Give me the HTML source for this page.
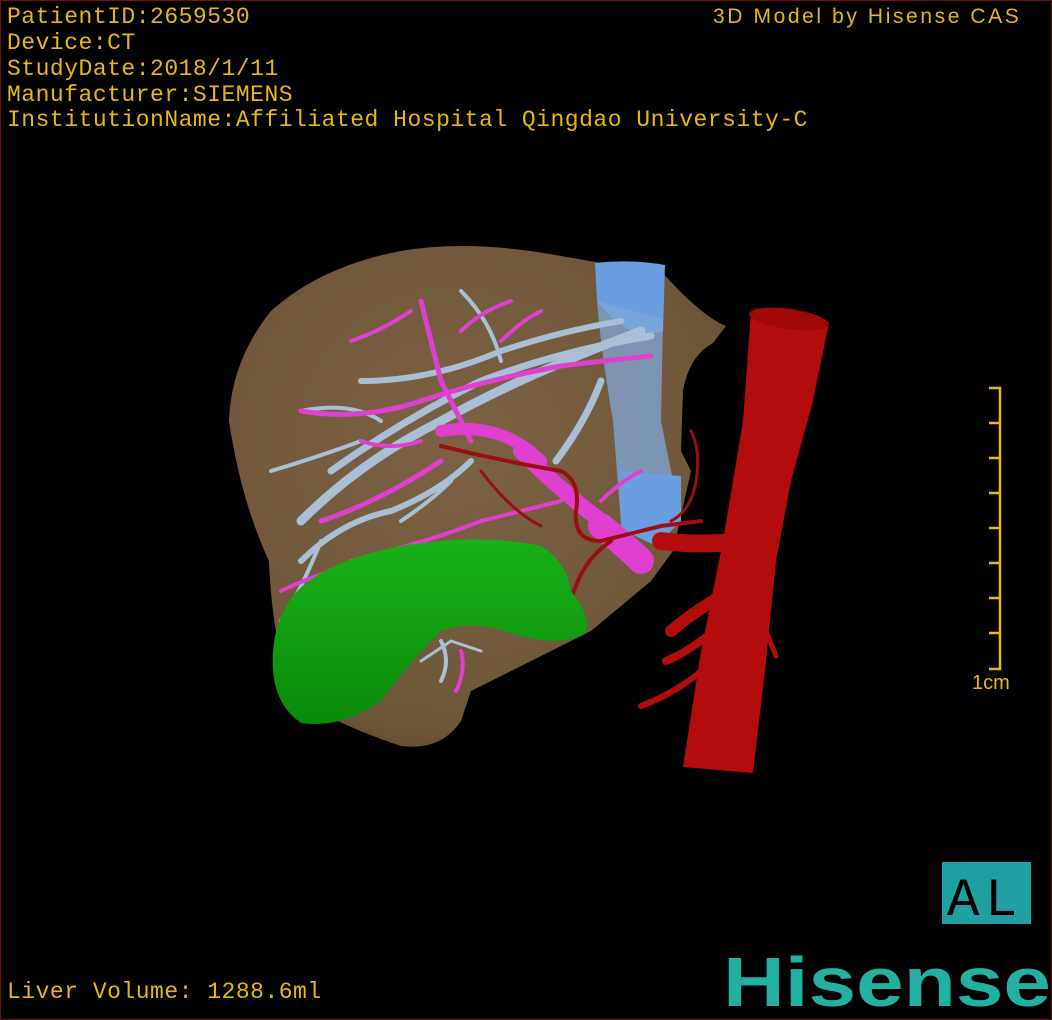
<!DOCTYPE html>
<html><head><meta charset="utf-8"><style>
html,body{margin:0;padding:0;background:#000;}
#c{position:relative;width:1050px;height:1018px;border:1px solid #6e1010;background:#000;overflow:hidden;}
.t{position:absolute;left:6px;color:#e8b810;font-family:"Liberation Mono",monospace;font-size:23px;letter-spacing:0.5px;line-height:26px;white-space:pre;}
svg{position:absolute;left:0;top:0;}
</style></head><body><div id="c">
<svg width="1052" height="1020" viewBox="0 0 1052 1020">
<defs>
<radialGradient id="lv" cx="0.45" cy="0.4" r="0.7"><stop offset="0" stop-color="#7c6244"/><stop offset="0.8" stop-color="#6e5639"/><stop offset="1" stop-color="#5a4630"/></radialGradient>
<linearGradient id="gr" x1="0" y1="0" x2="0" y2="1"><stop offset="0" stop-color="#18b018"/><stop offset="1" stop-color="#0a8a0a"/></linearGradient>
</defs>
<path fill="url(#lv)" d="M270,310 Q320,265 400,250 Q470,238 560,255 L600,262 L660,270 Q700,315 725,325 L712,342 Q688,355 682,390 L680,450 L690,470 L672,550 L650,580 L590,630 L560,645 L470,690 L460,720 Q440,750 400,745 Q340,725 300,700 Q272,660 268,560 Q240,500 228,420 Q230,360 270,310Z"/>
<path fill="#6a9ee0" d="M594,262 Q630,258 664,264 L662,330 L640,335 Q610,320 596,300Z"/>
<path fill="#7fa8d8" opacity="0.75" d="M596,300 L662,318 L660,420 L680,520 L620,522 L612,420 Q600,350 596,300Z"/>
<path fill="#6a9ee0" d="M618,470 L680,475 L680,520 L655,545 L620,528Z"/>
<g fill="none" stroke-linecap="round">
<g stroke="#a9bfd6">
<path stroke-width="9" d="M300,520 Q360,460 440,420 Q520,375 640,330"/>
<path stroke-width="7" d="M330,470 Q400,420 480,380 Q560,350 650,335"/>
<path stroke-width="6" d="M360,380 Q430,380 500,350 Q560,330 620,320"/>
<path stroke-width="6" d="M300,560 Q340,520 390,510 Q440,490 470,460"/>
<path stroke-width="4" d="M280,620 Q300,590 320,540"/>
<path stroke-width="4" d="M270,470 Q320,455 360,440"/>
<path stroke-width="4" d="M460,290 Q490,320 500,360"/>
<path stroke-width="4" d="M300,410 Q350,400 380,420"/>
<path stroke-width="7" d="M555,460 Q585,420 600,380"/>
<path stroke-width="4" d="M440,680 Q450,660 440,640"/>
<path stroke-width="3" d="M420,660 L450,640 L480,650"/>
<path stroke-width="4" d="M400,520 Q430,500 450,480"/>
</g>
<g stroke="#e040d0">
<path stroke-width="5" d="M300,410 Q360,420 420,400 Q480,380 560,365 Q600,360 650,355"/>
<path stroke-width="5" d="M420,300 Q430,340 440,380 Q460,420 470,440"/>
<path stroke-width="4" d="M350,340 Q380,330 410,310"/>
<path stroke-width="4" d="M460,330 Q480,310 510,300"/>
<path stroke-width="4" d="M500,340 Q520,320 540,310"/>
<path stroke-width="5" d="M320,520 Q380,500 440,460"/>
<path stroke-width="4" d="M350,560 Q430,540 480,520 Q520,510 560,500"/>
<path stroke-width="4" d="M280,590 Q300,580 330,570"/>
<path stroke-width="4" d="M460,650 Q465,670 455,690"/>
<path stroke-width="4" d="M360,440 Q390,450 420,440"/>
<path stroke-width="12" d="M440,430 Q500,420 540,460"/>
<path stroke-width="16" d="M520,450 Q560,490 600,520"/>
<path stroke-width="26" d="M600,525 Q625,545 640,560"/>
<path stroke-width="4" d="M600,500 Q620,480 640,470"/>
</g>
<g stroke="#9a1010">
<path stroke-width="4" d="M440,445 Q500,460 560,470 Q580,480 575,510 Q572,540 600,540 L660,525 L700,520"/>
<path stroke-width="4" d="M610,540 Q580,560 570,600"/>
<path stroke-width="3" d="M480,470 Q510,510 540,525"/>
<path stroke-width="3" d="M690,430 Q700,450 695,480 Q690,510 670,520"/>
</g>
</g>
<path fill="url(#gr)" d="M282,612 Q300,565 400,545 Q480,532 540,545 Q565,560 570,590 Q590,615 585,632 Q560,648 510,632 Q470,618 440,630 Q410,660 380,700 Q340,728 300,722 Q275,705 272,670 Q270,635 282,612Z"/>
<path fill="#b30c0c" d="M750,310 Q790,300 828,322 L812,400 L790,480 L775,560 L765,660 L752,772 L682,766 L700,650 L722,540 L742,420Z"/>
<g fill="none" stroke="#b30c0c" stroke-linecap="round">
<path stroke-width="18" d="M740,540 Q700,545 660,540"/>
<path stroke-width="12" d="M730,590 Q700,605 670,630"/>
<path stroke-width="8" d="M725,620 Q690,650 665,660"/>
<path stroke-width="6" d="M712,660 Q680,690 640,705"/>
<path stroke-width="5" d="M765,630 L775,655"/>
</g>
<ellipse cx="788" cy="318" rx="40" ry="10" fill="#a00808" transform="rotate(8 788 318)"/>
<g stroke="#e8b810" stroke-width="2.5" fill="none">
<path d="M988,387 L999,387 L999,668 L988,668"/>
<path d="M988,422h11M988,457h11M988,492h11M988,527h11M988,562h11M988,597h11M988,632h11"/>
</g>
<text x="971" y="688" fill="#e8b810" font-family="Liberation Sans,sans-serif" font-size="20">1cm</text>
<rect x="941" y="861" width="89" height="62" fill="#1f9fa0"/>
<text x="946" y="914" fill="#000" font-family="Liberation Mono,monospace" font-size="54">A</text>
<text x="984" y="914" fill="#000" font-family="Liberation Mono,monospace" font-size="54">L</text>
<text x="722" y="1005" fill="#24b0a0" font-family="Liberation Sans,sans-serif" font-size="70" font-weight="bold" textLength="328" lengthAdjust="spacingAndGlyphs">Hisense</text>
</svg>
<div class="t" style="top:3px">PatientID:2659530</div>
<div class="t" style="top:29px">Device:CT</div>
<div class="t" style="top:55px">StudyDate:2018/1/11</div>
<div class="t" style="top:81px">Manufacturer:SIEMENS</div>
<div class="t" style="top:106px">InstitutionName:Affiliated Hospital Qingdao University-C</div>
<div class="t" style="top:3px;left:712px;font-family:'Liberation Sans',sans-serif;font-size:21px;letter-spacing:2.6px">3D Model by Hisense CAS</div>
<div class="t" style="top:978px">Liver Volume: 1288.6ml</div>
</div></body></html>
